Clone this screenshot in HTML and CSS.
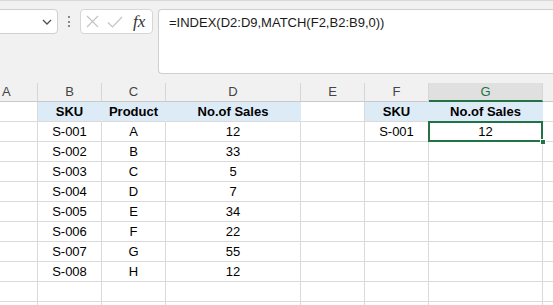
FILE: index.html
```html
<!DOCTYPE html>
<html lang="en">
<head>
<meta charset="utf-8">
<title>INDEX MATCH</title>
<link rel="stylesheet" href="styles.css">
</head>
<body>
<div class="app">
  <div class="fbar">
    <div class="namebox">
      <svg class="chev" width="10" height="6" viewBox="0 0 10 6"><path d="M1 1 L5 5 L9 1" fill="none" stroke="#505050" stroke-width="1.3"/></svg>
    </div>
    <div class="dots"><i></i><i></i><i></i></div>
    <div class="fxbox">
      <svg class="ico" width="13" height="13" viewBox="0 0 13 13"><path d="M1 1 L12 12 M12 1 L1 12" fill="none" stroke="#c4c4c4" stroke-width="1.2"/></svg>
      <svg class="ico" width="16" height="12" viewBox="0 0 16 12"><path d="M1 6.5 L5.5 11 L15 1" fill="none" stroke="#c4c4c4" stroke-width="1.2"/></svg>
      <span class="fx">fx</span>
    </div>
    <div class="formula">=INDEX(D2:D9,MATCH(F2,B2:B9,0))</div>
  </div>

  <div class="sheet">
    <div class="ch cha">A</div><div class="ch">B</div><div class="ch">C</div><div class="ch">D</div><div class="ch">E</div><div class="ch">F</div><div class="ch chsel">G</div><div class="ch"></div>

    <div class="c"></div><div class="c hd">SKU</div><div class="c hd">Product</div><div class="c hd">No.of Sales</div><div class="c"></div><div class="c hd">SKU</div><div class="c hd">No.of Sales</div><div class="c"></div>

    <div class="c"></div><div class="c">S-001</div><div class="c">A</div><div class="c">12</div><div class="c"></div><div class="c">S-001</div><div class="c sel">12<span class="handle"></span></div><div class="c"></div>

    <div class="c"></div><div class="c">S-002</div><div class="c">B</div><div class="c">33</div><div class="c"></div><div class="c"></div><div class="c"></div><div class="c"></div>

    <div class="c"></div><div class="c">S-003</div><div class="c">C</div><div class="c">5</div><div class="c"></div><div class="c"></div><div class="c"></div><div class="c"></div>

    <div class="c"></div><div class="c">S-004</div><div class="c">D</div><div class="c">7</div><div class="c"></div><div class="c"></div><div class="c"></div><div class="c"></div>

    <div class="c"></div><div class="c">S-005</div><div class="c">E</div><div class="c">34</div><div class="c"></div><div class="c"></div><div class="c"></div><div class="c"></div>

    <div class="c"></div><div class="c">S-006</div><div class="c">F</div><div class="c">22</div><div class="c"></div><div class="c"></div><div class="c"></div><div class="c"></div>

    <div class="c"></div><div class="c">S-007</div><div class="c">G</div><div class="c">55</div><div class="c"></div><div class="c"></div><div class="c"></div><div class="c"></div>

    <div class="c"></div><div class="c">S-008</div><div class="c">H</div><div class="c">12</div><div class="c"></div><div class="c"></div><div class="c"></div><div class="c"></div>

    <div class="c"></div><div class="c"></div><div class="c"></div><div class="c"></div><div class="c"></div><div class="c"></div><div class="c"></div><div class="c"></div>

    <div class="c"></div><div class="c"></div><div class="c"></div><div class="c"></div><div class="c"></div><div class="c"></div><div class="c"></div><div class="c"></div>
  </div>
</div>
</body>
</html>
```
FILE: styles.css
```css
* { box-sizing: border-box; }
html, body { margin: 0; padding: 0; }
body {
  width: 553px;
  height: 305px;
  overflow: hidden;
  background: #f1f1f1;
  font-family: "Liberation Sans", Arial, sans-serif;
}
.app {
  border-top: 1px solid #d8d8d8;
  width: 553px;
  height: 305px;
  overflow: hidden;
}
.fbar {
  display: flex;
  align-items: flex-start;
  padding-top: 8px;
  height: 82px;
}
.namebox {
  margin-left: -6px;
  width: 64px;
  height: 25px;
  background: #fff;
  border: 1px solid #cfcfcf;
  border-radius: 4px;
  display: flex;
  align-items: center;
  justify-content: flex-end;
  padding-right: 5px;
}
.chev { display: block; }
.dots {
  width: 22px;
  height: 25px;
  display: flex;
  flex-direction: column;
  align-items: center;
  justify-content: center;
  gap: 2.5px;
}
.dots i {
  display: block;
  width: 2px;
  height: 2px;
  background: #8a8a8a;
}
.fxbox {
  width: 73px;
  height: 25px;
  background: #fff;
  border: 1px solid #d6d6d6;
  border-radius: 4px;
  display: flex;
  align-items: center;
  padding-left: 5px;
  gap: 8px;
}
.ico { display: block; }
.fx {
  font-family: "Liberation Serif", "Times New Roman", serif;
  font-style: italic;
  font-size: 17px;
  color: #333;
  margin-left: 2px;
  line-height: 1;
}
.formula {
  margin-left: 5px;
  flex: 1;
  height: 65px;
  background: #fff;
  border: 1px solid #cfcfcf;
  border-right: none;
  border-radius: 4px 0 0 4px;
  padding: 5px 0 0 10px;
  font-size: 13px;
  line-height: 16px;
  color: #1a1a1a;
  white-space: nowrap;
}
.sheet {
  display: grid;
  grid-template-columns: 38px 64px 64px 135px 64px 64px 114px 40px;
  grid-template-rows: 19px repeat(11, 20px);
  background: #fff;
  width: 583px;
}
.ch {
  background: #f1f1f1;
  border-right: 1px solid #d6d6d6;
  border-bottom: 1px solid #c9c9c9;
  font-size: 13px;
  line-height: 18px;
  text-align: center;
  color: #444;
}
.cha { text-align: left; padding-left: 2px; }
.chsel {
  background: #e0e0e0;
  color: #217346;
  border-bottom: 2px solid #217346;
}
.c {
  position: relative;
  border-right: 1px solid #dadada;
  border-bottom: 1px solid #dadada;
  font-size: 13px;
  line-height: 19px;
  text-align: center;
  color: #000;
  white-space: nowrap;
}
.hd {
  background: #ddebf7;
  border-right-color: #ddebf7;
  font-weight: bold;
}
.sel::after {
  content: "";
  position: absolute;
  left: -1px;
  top: -1px;
  right: -1px;
  bottom: -1px;
  border: 2px solid #217346;
}
.handle {
  position: absolute;
  right: -4px;
  bottom: -4px;
  width: 6px;
  height: 6px;
  background: #217346;
  border: 1px solid #fff;
  z-index: 2;
}
```
